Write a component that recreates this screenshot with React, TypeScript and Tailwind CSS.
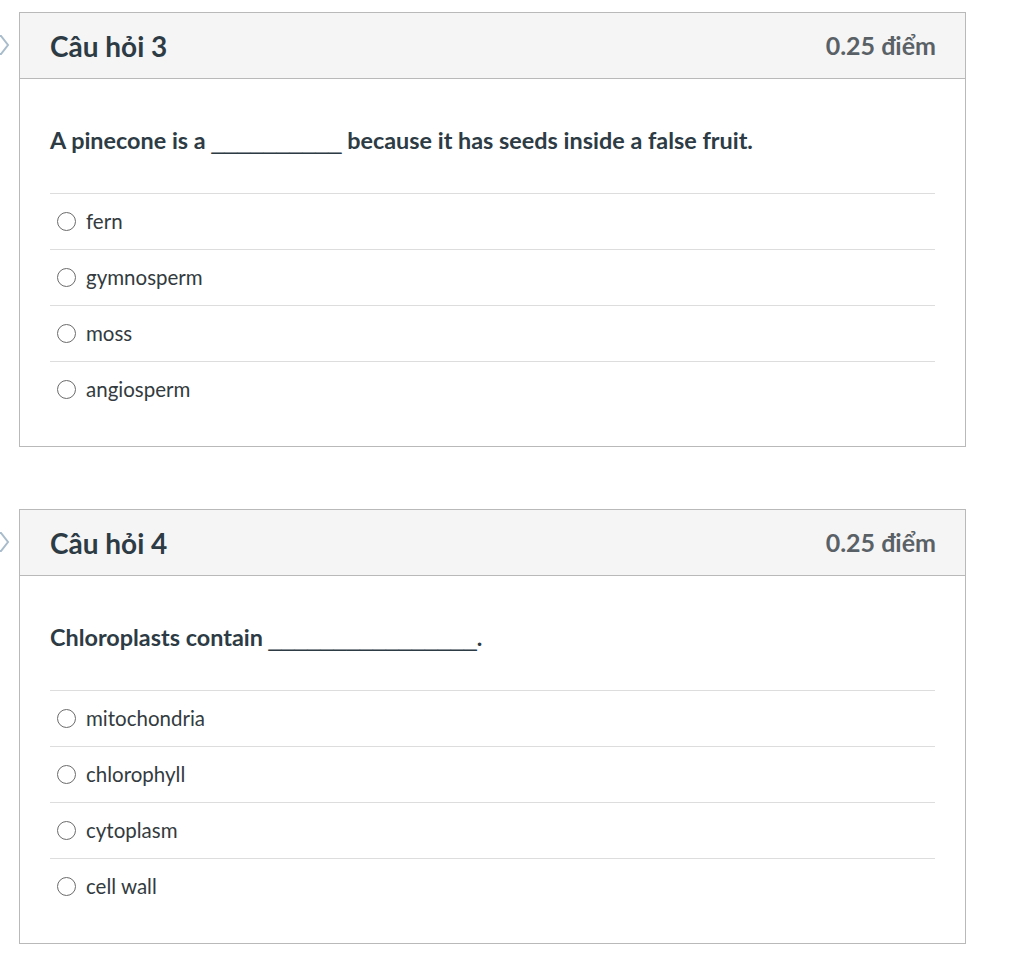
const questions = [
  {
    title: "Câu hỏi 3",
    points: "0.25 điểm",
    before: "A pinecone is a ",
    blank: "__________",
    after: " because it has seeds inside a false fruit.",
    options: ["fern", "gymnosperm", "moss", "angiosperm"],
  },
  {
    title: "Câu hỏi 4",
    points: "0.25 điểm",
    before: "Chloroplasts contain ",
    blank: "________________",
    after: ".",
    options: ["mitochondria", "chlorophyll", "cytoplasm", "cell wall"],
  },
];

function Flag() {
  return (
    <svg className="absolute left-0 top-[23px]" width="10" height="20" viewBox="0 0 10 20">
      <polyline points="-10,1 1,1 8,10 1,19 -10,19" fill="none" stroke="#a9bccb" strokeWidth="2" />
    </svg>
  );
}

function Question({ q }: { q: (typeof questions)[number] }) {
  return (
    <div className="relative">
      <Flag />
      <div className="ml-[19px] w-[947px] border border-[#b9b9b9] bg-white">
        <div className="flex h-[66px] items-center justify-between border-b border-[#b9b9b9] bg-[#f5f5f5] pl-[30px] pr-[29px]">
          <h2 className="text-[28px] font-bold text-[#2d3b45]">{q.title}</h2>
          <span className="pt-px text-[25px] font-bold text-[#5a6166]">{q.points}</span>
        </div>
        <div className="px-[30px] pt-[46px] pb-[29px]">
          <p className="mb-[37px] text-[23.4px] font-bold leading-[30px] text-[#2d3b45]">
            {q.before}
            <span className="font-['Liberation_Sans',sans-serif] font-normal">{q.blank}</span>
            {q.after}
          </p>
          <ul>
            {q.options.map((o) => (
              <li key={o} className="flex h-[56px] items-center gap-[10px] border-t border-[#dddddd] pl-[7px]">
                <span className="h-[19px] w-[19px] rounded-full border-[1.5px] border-[#6b6b6b]" />
                <span className="text-[20.5px] text-[#333b40]">{o}</span>
              </li>
            ))}
          </ul>
        </div>
      </div>
    </div>
  );
}

export default function App() {
  return (
    <div className="min-h-[964px] bg-white pt-[12px] font-['Lato',sans-serif]">
      <div className="flex flex-col gap-[62px]">
        {questions.map((q) => (
          <Question key={q.title} q={q} />
        ))}
      </div>
    </div>
  );
}
